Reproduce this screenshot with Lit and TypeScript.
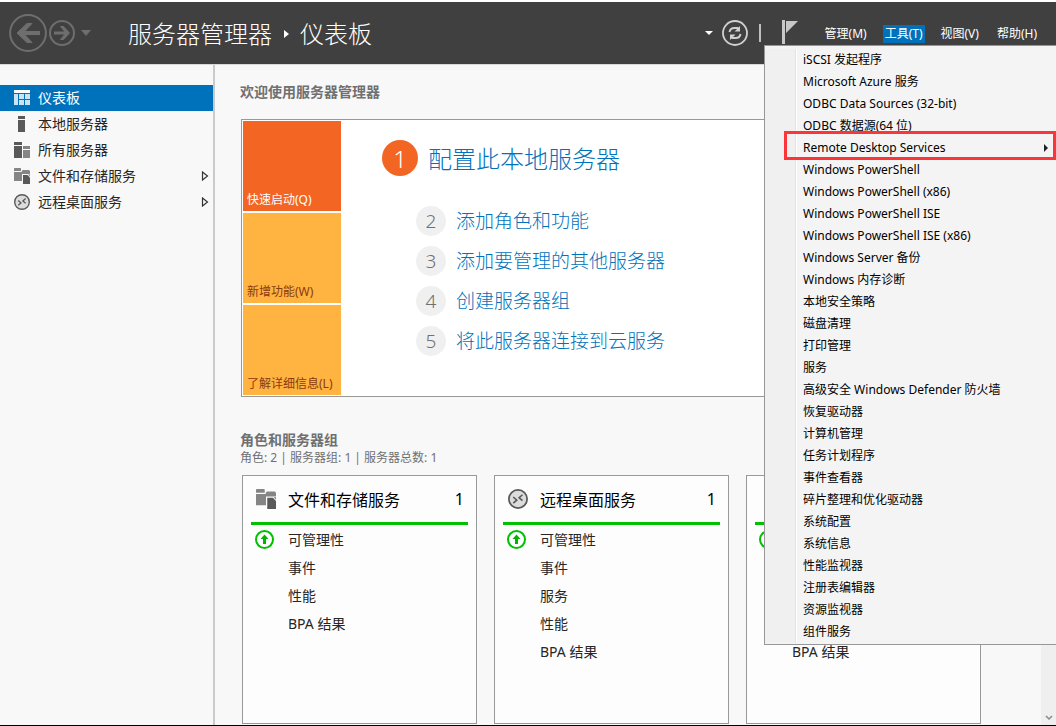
import { LitElement, html, svg, css, nothing } from "lit";
import { customElement, property } from "lit/decorators.js";

type IconName = "dashboard" | "server" | "servers" | "files" | "remote";

const icons: Record<IconName, unknown> = {
  dashboard: svg`
    <rect x="0" y="0" width="16" height="3" fill="#fff"/>
    <path d="M0 4h4v11H0zM5 4h5v5H5zM11 4h5v5h-5zM5 10h5v5H5zM11 10h5v5h-5z" fill="#cce3f4"/>`,
  server: svg`<path d="M4 0h7v3H4zM4 4h7v12H4z" fill="#595959"/>`,
  servers: svg`
    <path d="M0 0h8v3H0zM0 4h8v12H0z" fill="#595959"/>
    <path d="M9 4h7v3H9zM9 8h7v8H9z" fill="#858585"/>`,
  files: svg`
    <path d="M.5 0h6l.5.500V3H0V.5zM0 4h7.500L8.500 2H15l1 1v3H8v7H0z" fill="#858585"/>
    <path d="M9 7h4.500L16 9.500V16H9z" fill="#595959"/>
    <path d="M14 6.500h2v2z" fill="#858585"/>`,
  remote: svg`
    <circle cx="8" cy="8" r="7.300" fill="#dcdcdc" stroke="#595959" stroke-width="1.400"/>
    <path d="M4.200 6.400l2.800 2.500-2.800 2.400M11.600 4.600L8.900 7l2.700 2.300" fill="none" stroke="#595959" stroke-width="1.300"/>`,
};

const shared = css`
  * { box-sizing: border-box; }
  button { font: inherit; color: inherit; background: none; border: 0; padding: 0; margin: 0; text-align: left; cursor: pointer; }
  svg { display: block; flex: none; }
  a { text-decoration: none; }
  ul, ol { list-style: none; margin: 0; padding: 0; }
  h1, h2, h3, p { margin: 0; font-weight: 400; }
`;

@customElement("app-header")
class AppHeader extends LitElement {
  static styles = [shared, css`
    :host { display: flex; align-items: center; position: relative; height: 62px; flex: none; background: #404040; color: #fff; padding: 0 17px 0 9px; z-index: 2; }
    .nav { display: flex; align-items: center; gap: 2px; }
    .crumbs { display: flex; align-items: center; gap: 11px; margin-left: 34px; padding-top: 2px; font-size: 24px; line-height: 32px; font-weight: 300; white-space: nowrap; }
    .tools { display: flex; align-items: center; margin-left: auto; gap: 8px; }
    .bar { width: 2px; height: 18px; background: #bfbfbf; margin: 0 12px 0 2px; }
    .menus { display: flex; gap: 14px; margin-left: 16px; padding-top: 1px; font-size: 12px; line-height: 18px; }
    .menu { padding: 0 2px; white-space: nowrap; }
    .open { background: #0072bc; }
  `];
  render() {
    return html`
      <nav class="nav">
        <button aria-label="后退"><svg width="38" height="38" viewBox="0 0 38 38" fill="none" stroke="#6e6e6e">
          <circle cx="19" cy="19" r="17.900" stroke-width="2"/>
          <path d="M11 19H31" stroke-width="4"/><path d="M18 9.500H23L14 19L23 28.500H18L8 19Z" fill="#6e6e6e" stroke-width="1"/></svg></button>
        <button aria-label="前进"><svg width="26" height="26" viewBox="0 0 26 26" fill="none" stroke="#6e6e6e">
          <circle cx="13" cy="13" r="12" stroke-width="2"/>
          <path d="M5 13H19" stroke-width="3"/><path d="M11.500 6.500H14.500L20.500 13L14.500 19.500H11.500L17 13Z" fill="#6e6e6e" stroke-width="1"/></svg></button>
        <button aria-label="历史记录"><svg width="17" height="10" viewBox="0 0 17 10"><path d="M4 2h10L9 8z" fill="#6e6e6e"/></svg></button>
      </nav>
      <h1 class="crumbs"><span>服务器管理器</span>
        <svg width="6" height="8" viewBox="0 0 6 8"><path d="M1 0l5 4-5 4z" fill="#fff"/></svg>
        <span>仪表板</span></h1>
      <div class="tools">
        <button aria-label="更多"><svg width="8" height="5" viewBox="0 0 8 5"><path d="M0 0h8L4 4z" fill="#fff"/></svg></button>
        <button aria-label="刷新"><svg width="28" height="28" viewBox="0 0 28 28" fill="none" stroke="#d0d0d0">
          <circle cx="14" cy="14" r="12" stroke-width="1.800"/>
          <path d="M8.500 13c.500-3 2.500-4 5-4h4M19.500 15c-.500 3-2.500 4-5 4h-4" stroke-width="2"/>
          <path d="M19 7v5.500h-5.500zM9 21v-5.500h5.500z" fill="#d0d0d0" stroke="none"/></svg></button>
        <span class="bar"></span>
        <button aria-label="通知"><svg width="18" height="28" viewBox="0 0 18 28"><path d="M1 1h3v24H1zM5 2h12L5 14z" fill="#c8c8c8"/></svg></button>
        <nav class="menus">
          <button class="menu">管理(M)</button>
          <button class="menu open" aria-expanded="true">工具(T)</button>
          <button class="menu">视图(V)</button>
          <button class="menu">帮助(H)</button>
        </nav>
      </div>
      <tools-menu></tools-menu>`;
  }
}

@customElement("tools-menu")
class ToolsMenu extends LitElement {
  static styles = [shared, css`
    :host { position: absolute; top: 43px; right: 0; width: 292px; background: #f4f4f4; border: 1px solid #979797; border-right: 0; padding: 3px 0 1px; color: #000; }
    .list { background: linear-gradient(90deg, #f0f0f0 30px, #e2e2e2 30px 31px, #fff 31px 32px, transparent 32px); }
    .item { display: flex; align-items: center; justify-content: space-between; position: relative; width: 100%; height: 22px; padding: 0 8px 0 38px; font-size: 12px; line-height: 22px; white-space: nowrap; }
    .marked::after { content: ""; position: absolute; inset: -6px 0 -1px 19px; border: 3px solid #fc3638; z-index: 1; }
  `];
  items = [
    "iSCSI 发起程序", "Microsoft Azure 服务", "ODBC Data Sources (32-bit)", "ODBC 数据源(64 位)", "Remote Desktop Services",
    "Windows PowerShell", "Windows PowerShell (x86)", "Windows PowerShell ISE", "Windows PowerShell ISE (x86)",
    "Windows Server 备份", "Windows 内存诊断", "本地安全策略", "磁盘清理", "打印管理", "服务",
    "高级安全 Windows Defender 防火墙", "恢复驱动器", "计算机管理", "任务计划程序", "事件查看器", "碎片整理和优化驱动器",
    "系统配置", "系统信息", "性能监视器", "注册表编辑器", "资源监视器", "组件服务",
  ];
  render() {
    return html`<ul class="list">${this.items.map((label) => {
      const sub = label === "Remote Desktop Services";
      return html`<li><button class="item ${sub ? "marked" : ""}"><span>${label}</span>
        ${sub ? html`<svg width="4" height="8" viewBox="0 0 4 8"><path d="M0 0l4 4-4 4z" fill="#222"/></svg>` : nothing}</button></li>`;
    })}</ul>`;
  }
}

@customElement("side-nav")
class SideNav extends LitElement {
  static styles = [shared, css`
    :host { display: block; width: 215px; flex: none; padding-top: 20px; border-right: 2px solid #cacaca; }
    .link { display: flex; align-items: center; gap: 8px; height: 26px; padding: 0 4px 0 14px; font-size: 14px; color: #262626; }
    .current { background: #0072bc; color: #fff; }
    .label { flex: 1; padding-bottom: 2px; }
  `];
  items: { icon: IconName; label: string; sub?: boolean }[] = [
    { icon: "dashboard", label: "仪表板" },
    { icon: "server", label: "本地服务器" },
    { icon: "servers", label: "所有服务器" },
    { icon: "files", label: "文件和存储服务", sub: true },
    { icon: "remote", label: "远程桌面服务", sub: true },
  ];
  render() {
    return html`<nav>${this.items.map((item, i) => html`
      <a class="link ${i === 0 ? "current" : ""}" href="#">
        <svg width="16" height="16" viewBox="0 0 16 16">${icons[item.icon]}</svg>
        <span class="label">${item.label}</span>
        ${item.sub ? html`<svg width="8" height="10" viewBox="0 0 8 10"><path d="M1.500 1v8l5-4z" fill="none" stroke="#333" stroke-width="1.200"/></svg>` : nothing}
      </a>`)}</nav>`;
  }
}

@customElement("role-card")
class RoleCard extends LitElement {
  @property() icon: IconName = "files";
  @property() name = "";
  @property() count = "";
  @property({ attribute: false }) rows: string[] = [];
  static styles = [shared, css`
    :host { display: block; width: 235px; flex: none; border: 1px solid #999; background: #fdfdfd; padding: 0 8px; color: #262626; }
    .head { display: flex; align-items: center; gap: 12px; height: 49px; padding: 0 4px 0 5px; border-bottom: 3px solid #00c000; font-size: 16px; color: #000; }
    .name { flex: 1; font-size: 16px; }
    .rows { font-size: 14px; }
    .row { display: grid; grid-template-columns: 33px 1fr; align-items: center; height: 28px; padding-left: 4px; }
    .label { grid-column: 2; color: inherit; }
  `];
  render() {
    return html`
      <header class="head">
        <svg width="20" height="20" viewBox="0 0 16 16">${icons[this.icon]}</svg>
        <h3 class="name">${this.name}</h3><span>${this.count}</span>
      </header>
      <ul class="rows">${this.rows.map((row, i) => html`<li class="row">
        ${i === 0 ? html`<svg width="19" height="19" viewBox="0 0 19 19"><circle cx="9.500" cy="9.500" r="8.500" fill="#fff" stroke="#00c000" stroke-width="2"/><path d="M9.500 4.500l4 4.500h-2.500v5H8V9H5.500z" fill="#00b400"/></svg>` : nothing}
        ${row ? html`<a class="label" href="#">${row}</a>` : nothing}</li>`)}</ul>`;
  }
}

@customElement("app-root")
class AppRoot extends LitElement {
  static styles = [shared, css`
    :host { display: flex; flex-direction: column; height: 100vh; overflow: hidden; border-top: 2px solid #fff; border-bottom: 1px solid #000; box-sizing: border-box; background: #f8f8f8; font-family: "Noto Sans", "Noto Sans CJK SC", sans-serif; }
    .body { display: flex; flex: 1; min-height: 0; border-top: 1px solid #d8d8d8; }
    .main { display: flex; flex-direction: column; flex: 1; min-width: 0; padding: 16px 11px 1px 25px; color: #707070; }
    .heading { font-size: 14px; line-height: 22px; font-weight: 700; }
    .welcome { display: flex; flex: none; margin: 16px 0 32px 1px; border: 1px solid #999; padding: 1px; background: #fff; }
    .tiles { display: grid; grid-template-rows: repeat(3, 90px); gap: 2px; width: 98px; }
    .tile { display: flex; align-items: flex-end; padding: 0 4px 2px; font-size: 12px; line-height: 18px; white-space: nowrap; background: #ffb340; color: #8a3a10; }
    .hot { background: #f26522; color: #fff; }
    .steps { padding: 19px 0 0 41px; }
    .step { display: flex; align-items: center; gap: 10px; height: 40px; padding-left: 34px; font-size: 19px; font-weight: 300; color: #707070; }
    .first { height: 36px; padding-left: 0; margin-bottom: 25px; font-size: 24px; }
    .num { display: grid; place-items: center; width: 30px; height: 30px; border-radius: 50%; background: #f0f0f0; }
    .first .num { width: 36px; height: 36px; background: #f26522; color: #fff; }
    .step a { padding-bottom: 2px; color: #0072bc; white-space: nowrap; }
    .summary { font-size: 12px; line-height: 14px; margin-bottom: 10px; }
    .cards { display: flex; flex: 1; gap: 17px; padding-left: 2px; }
    .scroll { display: flex; flex-direction: column; justify-content: flex-end; align-items: center; width: 15px; padding-bottom: 4px; background: #efefef; }
  `];
  steps = ["配置此本地服务器", "添加角色和功能", "添加要管理的其他服务器", "创建服务器组", "将此服务器连接到云服务"];
  tiles = ["快速启动(Q)", "新增功能(W)", "了解详细信息(L)"];
  render() {
    return html`
      <app-header></app-header>
      <div class="body">
        <side-nav></side-nav>
        <main class="main">
          <h2 class="heading">欢迎使用服务器管理器</h2>
          <section class="welcome">
            <div class="tiles">${this.tiles.map((t, i) => html`<button class="tile ${i === 0 ? "hot" : ""}">${t}</button>`)}</div>
            <ol class="steps">${this.steps.map((s, i) => html`<li class="step ${i === 0 ? "first" : ""}"><span class="num">${i + 1}</span><a href="#">${s}</a></li>`)}</ol>
          </section>
          <h2 class="heading">角色和服务器组</h2>
          <p class="summary">角色: 2 | 服务器组: 1 | 服务器总数: 1</p>
          <div class="cards">
            <role-card icon="files" name="文件和存储服务" count="1" .rows=${["可管理性", "事件", "性能", "BPA 结果"]}></role-card>
            <role-card icon="remote" name="远程桌面服务" count="1" .rows=${["可管理性", "事件", "服务", "性能", "BPA 结果"]}></role-card>
            <role-card icon="server" .rows=${["", "", "", "", "BPA 结果"]}></role-card>
          </div>
        </main>
        <div class="scroll"><svg width="8" height="6" viewBox="0 0 8 6"><path d="M1 1l3 3 3-3" fill="none" stroke="#888" stroke-width="1.500"/></svg></div>
      </div>`;
  }
}
